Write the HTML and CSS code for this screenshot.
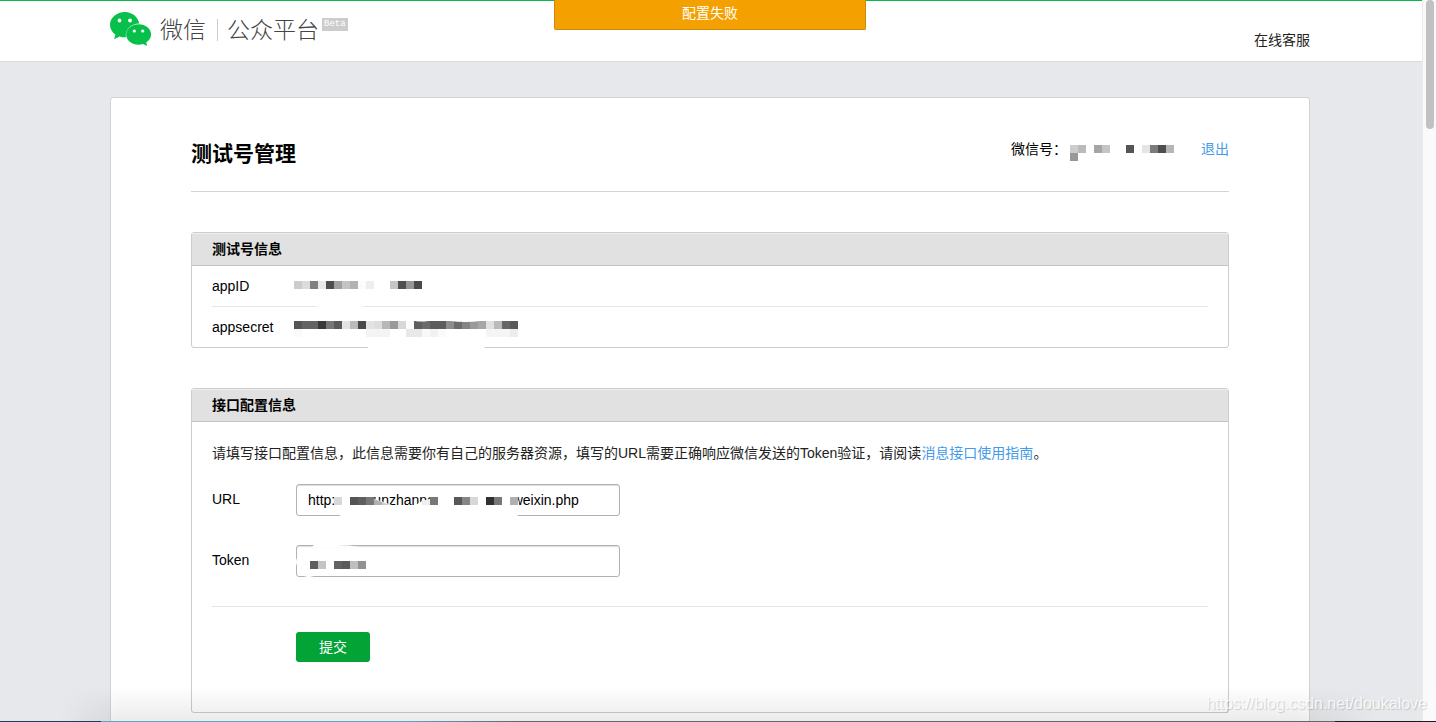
FILE: index.html
```html
<!DOCTYPE html>
<html lang="zh-CN">
<head>
<meta charset="utf-8">
<title>微信公众平台</title>
<link rel="stylesheet" href="styles.css">
</head>
<body>
<div class="shell">
  <div class="page">
    <header class="header">
      <div class="container header-inner">
        <div class="brand">
          <svg class="brand-mark" viewBox="0 0 42 35" width="42" height="35" aria-hidden="true">
            <path fill="#07c04a" d="M15 0C6.700 0 0 5.700 0 12.800c0 4 2.100 7.500 5.500 9.900L4 27.300l5.500-2.900c1.800.6 3.600.9 5.500.9h1C14.500 18.500 20.500 11.500 29.300 11.500C28 5 22.300 0 15 0z"/>
            <path fill="#07c04a" d="M28.600 12.300c-7 0-12.500 4.500-12.500 10.200s5.500 10.200 12.500 10.200c1.500 0 3-.2 4.300-.7l4.300 2.100-1-3.700c3-2 4.900-4.700 4.900-7.900 0-5.700-5.500-10.200-12.500-10.200z"/>
            <g fill="#fff"><circle cx="9.500" cy="8.500" r="1.900"/><circle cx="20" cy="8.500" r="1.900"/><circle cx="24.300" cy="19" r="1.600"/><circle cx="32.700" cy="19" r="1.600"/></g>
          </svg>
          <span class="brand-name">微信</span>
          <span class="brand-sub">公众平台</span>
          <span class="brand-tag">Beta</span>
        </div>
        <a class="service" href="#">在线客服</a>
      </div>
      <div class="toast" role="alert">配置失败</div>
    </header>

    <main class="container card">
      <div class="card-head">
        <h1>测试号管理</h1>
        <div class="account">
          <span>微信号：</span>
          <svg class="account-id" viewBox="0 0 104 16" width="104" height="16" shape-rendering="crispEdges" aria-hidden="true">
            <rect width="8" height="8" fill="#ccc"/><rect x="8" width="8" height="8" fill="#bbb"/><rect x="24" width="8" height="8" fill="#a5a5a5"/><rect x="32" width="8" height="8" fill="#c5c5c5"/><rect x="56" width="8" height="8" fill="#555"/><rect x="72" width="8" height="8" fill="#e5e5e5"/><rect x="80" width="8" height="8" fill="#7c7c7c"/><rect x="88" width="8" height="8" fill="#4e4e4e"/><rect x="96" width="8" height="8" fill="#b6b6b6"/><rect y="8" width="8" height="8" fill="#989898"/>
          </svg>
          <a href="#">退出</a>
        </div>
      </div>

      <section class="panel">
        <h2>测试号信息</h2>
        <dl class="info">
          <div class="info-row">
            <dt>appID</dt>
            <dd>
              <svg class="patch patch-id" viewBox="0 0 128 32" width="128" height="32" aria-hidden="true">
                <path fill="#fff" d="M20 27C24 24 28 24 38 24s30 0 38 3H20z"/>
                <g shape-rendering="crispEdges"><rect width="8" height="8" fill="#ccc"/><rect x="8" width="8" height="8" fill="#dcdcdc"/><rect x="16" width="8" height="8" fill="#808080"/><rect x="24" width="8" height="8" fill="#e8e8e8"/><rect x="32" width="8" height="8" fill="#4e4e4e"/><rect x="40" width="8" height="8" fill="#a0a0a0"/><rect x="48" width="8" height="8" fill="#c4c4c4"/><rect x="56" width="8" height="8" fill="#b2b2b2"/><rect x="64" width="8" height="8" fill="#fcfcfc"/><rect x="72" width="8" height="8" fill="#eee"/><rect x="96" width="8" height="8" fill="#c6c6c6"/><rect x="104" width="8" height="8" fill="#505050"/><rect x="112" width="8" height="8" fill="#969696"/><rect x="120" width="8" height="8" fill="#4a4a4a"/></g>
              </svg>
            </dd>
          </div>
          <div class="info-row">
            <dt>appsecret</dt>
            <dd>
              <svg class="patch patch-secret" viewBox="0 0 224 32" width="224" height="32" aria-hidden="true">
                <path fill="#fff" d="M74 24h114l4 4H74z"/>
                <g shape-rendering="crispEdges"><rect width="8" height="8" fill="#555"/><rect x="8" width="16" height="8" fill="#646464"/><rect x="24" width="8" height="8" fill="#3a3a3a"/><rect x="32" width="8" height="8" fill="#777"/><rect x="40" width="8" height="8" fill="#5a5a5a"/><rect x="48" width="8" height="8" fill="#e4e4e4"/><rect x="56" width="8" height="8" fill="#bbb"/><rect x="64" width="8" height="8" fill="#484848"/><rect x="72" width="8" height="8" fill="#e2e2e2"/><rect x="80" width="8" height="8" fill="#ddd"/><rect x="88" width="8" height="8" fill="#b8b8b8"/><rect x="96" width="8" height="8" fill="#999"/><rect x="104" width="8" height="8" fill="#d8d8d8"/><rect x="112" width="8" height="8" fill="#fcfcfc"/><rect x="120" width="8" height="8" fill="#5e5e5e"/><rect x="128" width="8" height="8" fill="#6a6a6a"/><rect x="136" width="16" height="8" fill="#5c5c5c"/><rect x="152" width="8" height="8" fill="#8c8c8c"/><rect x="160" width="8" height="8" fill="#6c6c6c"/><rect x="168" width="8" height="8" fill="#858585"/><rect x="176" width="8" height="8" fill="#9a9a9a"/><rect x="184" width="8" height="8" fill="#a6a6a6"/><rect x="192" width="8" height="8" fill="#e0e0e0"/><rect x="200" width="8" height="8" fill="#bbb"/><rect x="208" width="8" height="8" fill="#666"/><rect x="216" width="8" height="8" fill="#585858"/>
                <rect y="8" width="8" height="8" fill="#fafafa"/><rect x="72" y="8" width="24" height="8" fill="#f4f4f4"/><rect x="112" y="8" width="16" height="8" fill="#e8e8e8"/><rect x="128" y="8" width="8" height="8" fill="#f8f8f8"/><rect x="136" y="8" width="8" height="8" fill="#f2f2f2"/><rect x="144" y="8" width="8" height="8" fill="#fafafa"/><rect x="192" y="8" width="24" height="8" fill="#f5f5f5"/><rect x="216" y="8" width="8" height="8" fill="#ececec"/></g>
                <path fill="#fff" d="M121 0h13q-7 1-13 0zM156 0h30q-14 2-30 0z"/>
              </svg>
            </dd>
          </div>
        </dl>
      </section>

      <section class="panel">
        <h2>接口配置信息</h2>
        <form class="config">
          <p>请填写接口配置信息，此信息需要你有自己的服务器资源，填写的URL需要正确响应微信发送的Token验证，请阅读<a href="#">消息接口使用指南</a>。</p>
          <div class="field">
            <label for="url">URL</label>
            <div class="field-box">
              <input id="url" type="text" value="http:&nbsp;&nbsp;&nbsp;&nbsp;&nbsp;&nbsp;&nbsp;&nbsp;yunzhanne&nbsp;&nbsp;&nbsp;&nbsp;&nbsp;&nbsp;&nbsp;&nbsp;&nbsp;&nbsp;&nbsp;&nbsp;&nbsp;&nbsp;&nbsp;&nbsp;&nbsp;&nbsp;&nbsp;&nbsp;weixin.php">
              <svg class="smudge" viewBox="0 0 324 32" width="324" height="32" aria-hidden="true">
                <path fill="#fff" d="M38 6v20h38V6zM76 14l20 7v5H74zM118 22l8-5 8-2h10v11h-26zM44 26h174l4 6H44zM214 8h5l4 11v5h-9z"/>
                <g shape-rendering="crispEdges"><rect x="38" y="13" width="8" height="8" fill="#d8d8d8"/><rect x="54" y="13" width="8" height="8" fill="#555"/><rect x="62" y="13" width="8" height="8" fill="#5f5f5f"/><rect x="70" y="13" width="8" height="8" fill="#787878"/><rect x="134" y="13" width="8" height="8" fill="#787878"/><rect x="158" y="13" width="8" height="8" fill="#585858"/><rect x="166" y="13" width="8" height="8" fill="#868686"/><rect x="174" y="13" width="8" height="8" fill="#d8d8d8"/><rect x="190" y="13" width="8" height="8" fill="#303030"/><rect x="198" y="13" width="8" height="8" fill="#787878"/><rect x="214" y="13" width="8" height="8" fill="#b0b0b0"/></g>
                <path fill="#b0b0b0" d="M78 15l8 3v3h-8z"/><path fill="#ccc" d="M86 18l8 3h-8z"/><path fill="#eee" d="M126 17l8-2v6h-8z"/>
              </svg>
            </div>
          </div>
          <div class="field">
            <label for="token">Token</label>
            <div class="field-box">
              <input id="token" type="text">
              <svg class="smudge" viewBox="0 0 324 32" width="324" height="32" aria-hidden="true">
                <path fill="#fff" d="M18 0h22q14 0 24 2H16zM0 13q2 3 0 8zM8 32q4-2 10 0z"/>
                <g shape-rendering="crispEdges"><rect x="14" y="16" width="8" height="8" fill="#5e5e5e"/><rect x="22" y="16" width="8" height="8" fill="#c4c4c4"/><rect x="38" y="16" width="8" height="8" fill="#626262"/><rect x="46" y="16" width="8" height="8" fill="#5a5a5a"/><rect x="54" y="16" width="8" height="8" fill="#bfbfbf"/><rect x="62" y="16" width="8" height="8" fill="#929292"/></g>
              </svg>
            </div>
          </div>
          <div class="actions">
            <button type="button">提交</button>
          </div>
        </form>
      </section>
    </main>
  </div>
  <div class="scrollbar" aria-hidden="true"><div class="thumb"></div></div>
  <div class="shade" aria-hidden="true"></div>
  <div class="edge" aria-hidden="true"></div>
  <div class="watermark">https://blog.csdn.net/doukalove</div>
</div>
</body>
</html>
```
FILE: styles.css
```css
* { box-sizing: border-box; }

body {
  margin: 0;
  background: #e7e8eb;
  color: #000;
  font: 14px/20px "Liberation Sans", "Noto Sans CJK SC", sans-serif;
}

a { color: #459ae9; text-decoration: none; }
h1, h2, p, dl, dd { margin: 0; }

.shell {
  position: relative;
  display: flex;
  height: 100vh;
  overflow: hidden;
}

.page { flex: 1; min-width: 0; }

.container {
  width: calc(100% - 222px);
  max-width: 1200px;
  margin: 0 112px 0 110px;
}

.header {
  position: relative;
  height: 62px;
  background: #fff;
  border-top: 1px solid #07b84a;
  border-bottom: 1px solid #d9dadc;
}

.header-inner { display: flex; justify-content: space-between; }

.brand {
  display: flex;
  align-items: flex-start;
  padding-top: 11px;
  color: #444;
  font-size: 23px;
  line-height: 36px;
  font-weight: 300;
}

.brand-name { margin-left: 8px; }

.brand-sub {
  display: flex;
  align-items: center;
}

.brand-sub::before {
  content: "";
  height: 22px;
  margin: 0 9px 0 11px;
  border-left: 1px solid #ccc;
}

.brand-tag {
  margin: 6px 0 0 3px;
  padding: 0 2px;
  background: #ccc;
  color: #fff;
  font: 9px/13px "Liberation Mono", monospace;
}

.service {
  padding-top: 29px;
  color: #222;
}

.toast {
  position: absolute;
  top: -1px;
  left: 50%;
  width: 312px;
  height: 30px;
  margin-left: -157px;
  border: 1px solid #c98a0c;
  border-top: 0;
  border-radius: 0 0 2px 2px;
  background: #f4a000;
  color: #fff;
  line-height: 27px;
  text-align: center;
}

.card {
  margin-top: 35px;
  padding: 0 80px 80px;
  border: 1px solid #d3d3d5;
  border-radius: 3px;
  background: #fff;
}

.card-head {
  display: flex;
  justify-content: space-between;
  padding: 40px 0 21px;
  border-bottom: 1px solid #d3d3d3;
}

h1 { font-size: 21px; line-height: 32px; }

.account { display: flex; }
.account-id { margin: 7px 27px 0 3px; }

.account span, .account a { line-height: 22px; }

.panel {
  margin-top: 40px;
  border: 1px solid #ccc;
  border-radius: 3px;
  background: #fff;
}

h2 {
  padding: 0 20px;
  border-top: 1px solid #eee;
  border-bottom: 1px solid #c4c4c4;
  background: #e1e1e1;
  font-size: 14px;
  line-height: 31px;
}

.info { padding: 0 20px; }

.info-row {
  display: flex;
  height: 41px;
  line-height: 40px;
  border-bottom: 1px solid #e5e5e5;
}

.info-row:last-child { height: 40px; border-bottom: 0; }
dt { width: 82px; }
dd { position: relative; }
.patch { position: absolute; left: 0; }
.patch-id { top: 15px; }
.patch-secret { top: 14px; }

.config { padding: 20px 20px 50px; color: #222; }
.config p { margin-bottom: 20px; line-height: 22px; }

.field {
  display: flex;
  margin-bottom: 29px;
}

.field label { width: 84px; line-height: 30px; color: #000; }
.field-box { position: relative; width: 324px; }

.field input {
  display: block;
  width: 100%;
  height: 32px;
  padding: 0 11px;
  border: 1px solid #b2b2b2;
  border-radius: 3px;
  background: #fff;
  box-shadow: inset 0 1px 1px #ddd;
  color: #000;
  font: inherit;
}

.smudge {
  position: absolute;
  top: 0;
  left: 0;
  pointer-events: none;
}

.actions {
  padding: 25px 0 0 84px;
  border-top: 1px solid #e5e5e5;
}

button {
  display: block;
  width: 74px;
  height: 30px;
  padding: 0;
  border: 0;
  border-radius: 3px;
  background: #04a335;
  color: #fff;
  font: inherit;
}

.scrollbar {
  width: 14px;
  padding: 0 2px 0 3px;
  border-left: 1px solid #eaeaea;
  background: #fafafa;
}

.thumb {
  height: 129px;
  border-radius: 4px;
  background: #c1c1c1;
}

.shade {
  position: absolute;
  right: 60px;
  bottom: 0;
  left: 60px;
  height: 36px;
  background: linear-gradient(transparent, rgba(0, 0, 0, 0.08));
  -webkit-mask-image: linear-gradient(90deg, transparent, #000 60px, #000 calc(100% - 80px), transparent);
  mask-image: linear-gradient(90deg, transparent, #000 60px, #000 calc(100% - 80px), transparent);
}

.edge {
  position: absolute;
  right: 0;
  bottom: 0;
  left: 0;
  height: 1px;
  background: linear-gradient(90deg, #1d4060 0 7%, #5ba6cc 7% 28%, #66666e 36% 93%, #1c1a20 93%);
}

.watermark {
  position: absolute;
  right: 9px;
  bottom: 8px;
  color: rgba(255, 255, 255, 0.8);
  font-size: 16px;
  text-shadow: 1px 1px 1px rgba(0, 0, 0, 0.16);
}
```
